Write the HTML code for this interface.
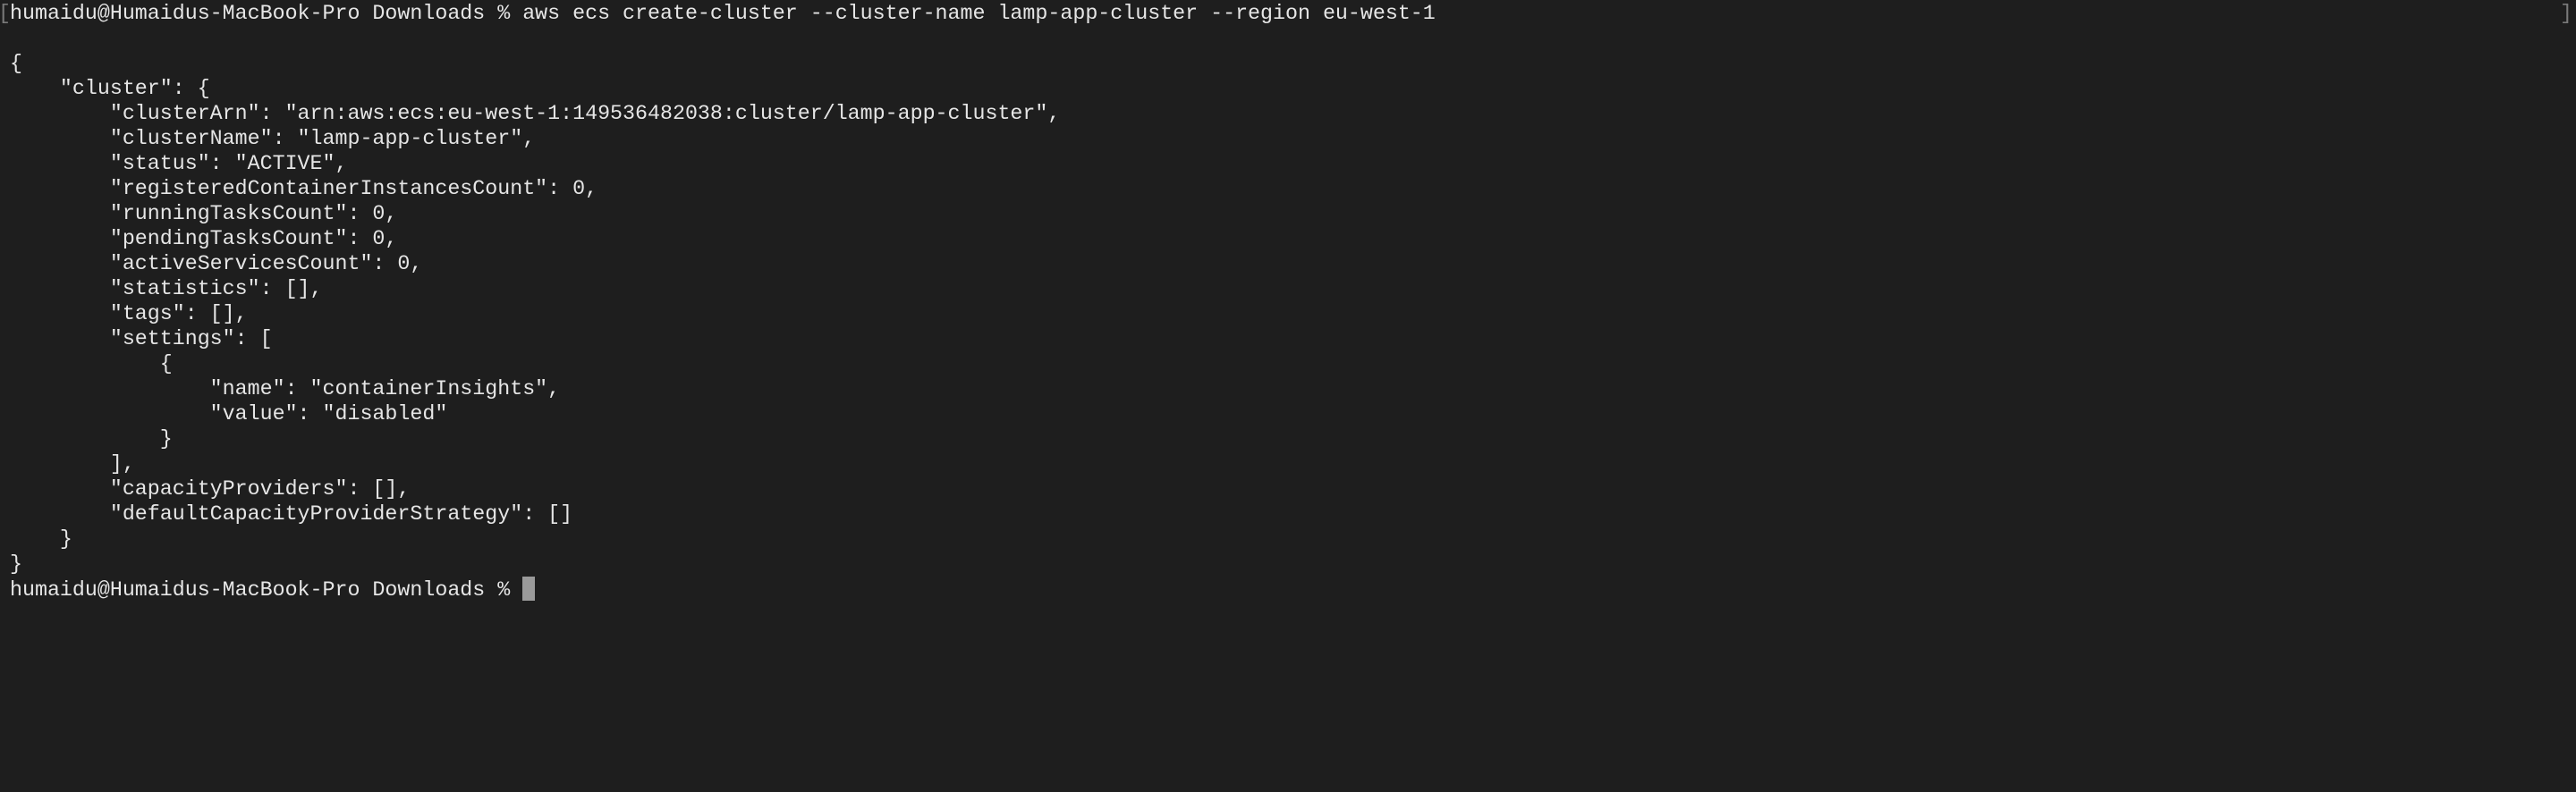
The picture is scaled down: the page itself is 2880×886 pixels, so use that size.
<!DOCTYPE html>
<html><head><meta charset="utf-8"><style>
html,body{margin:0;padding:0;background:#1e1e1e;width:2880px;height:886px;overflow:hidden}
pre{margin:0;position:absolute;left:11px;top:1px;font-family:"Liberation Mono","DejaVu Sans Mono",monospace;font-size:23.3px;line-height:28px;color:#e6e6e6;white-space:pre}
.cur{display:inline-block;width:14px;height:27px;background:#9a9a9a;vertical-align:-6px}
.b{position:absolute;top:1px;font-family:"Liberation Mono",monospace;font-size:23.3px;line-height:28px;color:#7a7a7a}
</style></head><body>
<div class="b" style="left:-2px">[</div>
<div class="b" style="left:2862px">]</div>
<pre>humaidu@Humaidus-MacBook-Pro Downloads % aws ecs create-cluster --cluster-name lamp-app-cluster --region eu-west-1

{
    "cluster": {
        "clusterArn": "arn:aws:ecs:eu-west-1:149536482038:cluster/lamp-app-cluster",
        "clusterName": "lamp-app-cluster",
        "status": "ACTIVE",
        "registeredContainerInstancesCount": 0,
        "runningTasksCount": 0,
        "pendingTasksCount": 0,
        "activeServicesCount": 0,
        "statistics": [],
        "tags": [],
        "settings": [
            {
                "name": "containerInsights",
                "value": "disabled"
            }
        ],
        "capacityProviders": [],
        "defaultCapacityProviderStrategy": []
    }
}
humaidu@Humaidus-MacBook-Pro Downloads % <span class="cur"></span></pre>
</body></html>
